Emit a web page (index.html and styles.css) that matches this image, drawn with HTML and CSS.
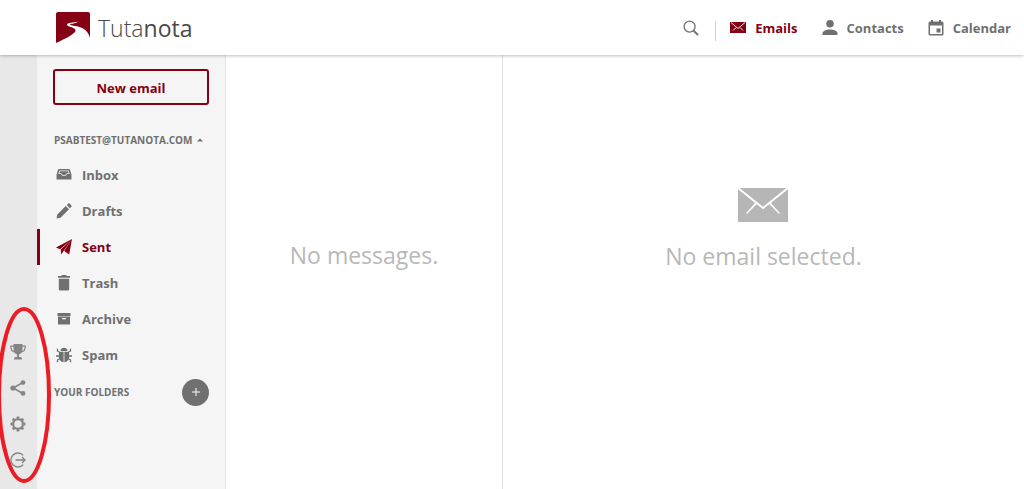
FILE: index.html
```html
<!DOCTYPE html>
<html lang="en">
<head>
  <meta charset="UTF-8">
  <meta name="viewport" content="width=device-width, initial-scale=1">
  <title>Tutanota</title>
  <link rel="stylesheet" href="styles.css">
</head>
<body>

<header class="header">
  <a class="logo" href="#">
    <svg class="logo-mark" viewBox="0 0 34 31" aria-hidden="true">
      <path fill="#850014" d="M2 0h30a2 2 0 0 1 2 2v24c-2-7-6-10-12-11.500-4-1-8-1-8-2 0-.8 5-.5 8.500-3-5 1.500-11.500 1-11.500 3.200 0 2.300 9.500 2.500 8.500 6.300C18.500 22 9 27 0 31V2a2 2 0 0 1 2-2z"/>
    </svg>
    <span class="logo-text"><span class="logo-light">Tuta</span>nota</span>
  </a>
  <nav class="nav">
    <button class="search-btn" aria-label="Search">
      <svg class="icon" viewBox="0 0 16 16" fill="none" stroke="currentColor" stroke-width="1.3"><circle cx="6.6" cy="6.6" r="5.5"/><path stroke-width="2" d="M10.7 10.7l4.400 4.400"/></svg>
    </button>
    <span class="divider"></span>
    <a class="nav-link active" href="#">
      <svg class="icon" viewBox="0 0 16 16"><path fill="currentColor" d="M0 2h16v11H0z"/><path fill="none" stroke="#fff" stroke-width=".9" d="M1 2.500l7 6 7-6M3 10.500l3-3M13 10.500l-3-3"/></svg>
      Emails
    </a>
    <a class="nav-link" href="#">
      <svg class="icon" viewBox="0 0 16 16" fill="currentColor"><circle cx="8" cy="3.800" r="3.800"/><path d="M.5 15v-1.500c0-2.600 4-4 7.500-4s7.500 1.400 7.500 4V15z"/></svg>
      Contacts
    </a>
    <a class="nav-link" href="#">
      <svg class="icon" viewBox="0 0 16 16" fill="currentColor"><path fill-rule="evenodd" d="M3 0h2v1.500h6V0h2v1.500h1a1.500 1.500 0 0 1 1.500 1.500v11a1.500 1.500 0 0 1-1.500 1.500H2A1.500 1.500 0 0 1 .5 14V3A1.500 1.500 0 0 1 2 1.500h1zM2 5.500V14h12V5.500z"/><path d="M8.500 8.500h4v4h-4z"/></svg>
      Calendar
    </a>
  </nav>
</header>

<div class="app">
  <div class="rail">
    <button class="rail-btn" aria-label="Premium">
      <svg class="icon" viewBox="0 0 16 16" fill="currentColor"><path d="M3.500 0h9v5c0 3-1.500 5-3.500 5.500V13h1.500c1 0 1.500 1 1.500 2v.5H4V15c0-1 .5-2 1.500-2H7v-2.500C5 10 3.500 8 3.500 5z"/><path fill="none" stroke="currentColor" stroke-width="1.200" d="M4 2.200H.8c0 4 1.700 5.600 4.500 5.600M12 2.200h3.200c0 4-1.700 5.600-4.500 5.600"/></svg>
    </button>
    <button class="rail-btn" aria-label="Invite">
      <svg class="icon" viewBox="0 0 16 16" fill="currentColor"><path fill="none" stroke="currentColor" stroke-width="1.500" d="M13 2.500L3 8l10 5.500"/><circle cx="13" cy="2.600" r="2.400"/><circle cx="3" cy="8" r="2.600"/><circle cx="13" cy="13.400" r="2.400"/></svg>
    </button>
    <button class="rail-btn" aria-label="Settings">
      <svg class="icon" viewBox="0 0 16 16" fill="none" stroke="currentColor"><circle cx="8" cy="8" r="4.900" stroke-width="2.200"/><path stroke-width="2.800" d="M8 .6v2M8 13.400v2M.6 8h2M13.400 8h2M2.800 2.800l1.400 1.400M11.800 11.800l1.400 1.400M13.200 2.800l-1.400 1.400M4.200 11.800l-1.400 1.400"/></svg>
    </button>
    <button class="rail-btn" aria-label="Logout">
      <svg class="icon" viewBox="0 0 16 16" fill="none" stroke="currentColor" stroke-width="1.400"><path d="M13.200 3.400a7 7 0 1 0 0 9.200M5.500 8H15M12 5l3 3-3 3"/></svg>
    </button>
  </div>

  <aside class="sidebar">
    <button class="new-email">New email</button>
    <button class="account">PSABTEST@TUTANOTA.COM
      <svg class="caret" viewBox="0 0 6 4" aria-hidden="true"><path fill="currentColor" d="M0 3.500L3 .5l3 3z"/></svg>
    </button>
    <nav class="folders">
      <a class="folder" href="#">
        <svg class="icon" viewBox="0 0 16 16" fill="currentColor"><path fill-rule="evenodd" d="M3.500 2h9c1 0 1.500.5 1.800 1.500L15.500 8v4.500H.5V8l1.200-4.500C2 2.500 2.500 2 3.500 2zM3.400 3.500L2.300 7H5l1.300 1.700h3.400L11 7h2.700l-1.100-3.500zM3.900 4.200h8.200L12.700 6.300h-2.100L9.300 7.900H6.700L5.400 6.300H3.300z"/></svg>
        Inbox
      </a>
      <a class="folder" href="#">
        <svg class="icon" viewBox="0 0 16 16" fill="currentColor"><path d="M.5 15.500l.8-4L9.800 3l3.200 3.200-8.500 8.500zM10.700 2.100L12.300.6c.4-.4.900-.4 1.300 0l1.800 1.800c.4.400.4.900 0 1.300l-1.500 1.600z"/></svg>
        Drafts
      </a>
      <a class="folder active" href="#">
        <svg class="icon" viewBox="0 0 16 16" fill="currentColor"><path d="M16 0L0 8.500l4 1.700zM16 0L4.800 10.600l.4 4.900 2.200-3.300zM16 0L8.200 12l5 3.500z"/></svg>
        Sent
      </a>
      <a class="folder" href="#">
        <svg class="icon" viewBox="0 0 16 16" fill="currentColor"><path d="M5.500 0h5v1H14v1.800H2V1h3.500zM2.800 3.800h10.400V14a1.500 1.500 0 0 1-1.500 1.500H4.300A1.500 1.500 0 0 1 2.800 14z"/></svg>
        Trash
      </a>
      <a class="folder" href="#">
        <svg class="icon" viewBox="0 0 16 16" fill="currentColor"><path fill-rule="evenodd" d="M1.500 2h13v3h-13zM2 5.600h12V13.500H2zM6 7v1.200h4V7z"/></svg>
        Archive
      </a>
      <a class="folder" href="#">
        <svg class="icon" viewBox="0 0 16 16" fill="currentColor"><path d="M4.500 4.200C4.500 1.800 6 .8 8 .8s3.500 1 3.500 3.400zM3 5h4.600v10.300C4.700 15 2.800 12.500 2.800 9.500zM13 5H8.400v10.300c2.900-.3 4.800-2.800 4.800-5.800z"/><path fill="none" stroke="currentColor" stroke-width="1.300" d="M4 5.500L1.500 4V1.700M12 5.500L14.500 4V1.700M3.500 9H0M12.500 9H16M4 11.500L1.500 13v2.300M12 11.500l2.500 1.500v2.300"/></svg>
        Spam
      </a>
    </nav>
    <div class="folders-head">
      <span>YOUR FOLDERS</span>
      <button class="add-btn" aria-label="Add folder">
        <svg class="plus" viewBox="0 0 10 10" fill="none" stroke="currentColor"><path d="M5 1v8M1 5h8"/></svg>
      </button>
    </div>
  </aside>

  <section class="mail-list">
    <p class="message">No messages.</p>
  </section>

  <main class="mail-view">
    <svg class="big-mail" viewBox="0 0 50 34" aria-hidden="true"><path fill="#b6b6b6" d="M0 0h50v34H0z"/><path fill="none" stroke="#fff" stroke-width="2" d="M0 0l25 20L50 0"/><path fill="#fff" d="M17.500 14.500l1.500 1.300L9 26l-1-.8zM32.500 14.500L31 15.800 41 26l1-.8z"/></svg>
    <p class="message">No email selected.</p>
  </main>
</div>

<!-- marker round the rail buttons -->
<svg class="marker" viewBox="0 0 52 180" aria-hidden="true"><ellipse cx="24" cy="91" rx="25" ry="86" fill="none" stroke="#ed1c24" stroke-width="4"/></svg>

</body>
</html>
```
FILE: styles.css
```css
* {
  box-sizing: border-box;
}

body {
  margin: 0;
  min-height: 100vh;
  display: flex;
  flex-direction: column;
  position: relative;
  overflow-x: hidden;
  font-family: 'Segoe UI', 'Open Sans', sans-serif;
  font-size: 13px;
  font-weight: 700;
  color: #707070;
  background: #fff;
}

a {
  color: inherit;
  text-decoration: none;
}

button {
  font: inherit;
  color: inherit;
  border: none;
  background: none;
  padding: 0;
  cursor: pointer;
}

.icon {
  width: 16px;
  height: 16px;
  flex: none;
}

.active {
  color: #850014;
}

/* Header */
.header {
  display: flex;
  align-items: center;
  justify-content: space-between;
  height: 55px;
  padding: 0 13px 0 56px;
  background: #fff;
  box-shadow: 0 1px 3px rgba(0, 0, 0, 0.25);
  z-index: 1;
}

.logo {
  display: flex;
  align-items: center;
  gap: 8px;
}

.logo-mark {
  width: 34px;
  height: 31px;
}

.logo-text {
  font-size: 23px;
  font-weight: 400;
  color: #4a4a4a;
}

.logo-light {
  font-weight: 300;
}

.nav {
  display: flex;
  align-items: center;
  gap: 24px;
}

.search-btn {
  display: flex;
  margin-right: -8px;
}

.divider {
  width: 1px;
  height: 20px;
  margin: 6px -10px 0 0;
  background: #d0d0d0;
}

.nav-link {
  display: flex;
  align-items: center;
  gap: 9px;
}

/* Columns */
.app {
  flex: 1;
  display: flex;
}

.rail {
  width: 37px;
  display: flex;
  flex-direction: column;
  justify-content: flex-end;
  padding: 0 1px 11px 0;
  background: #e8e8e8;
  color: #858585;
}

.rail-btn {
  height: 36px;
  display: flex;
  align-items: center;
  justify-content: center;
}

.sidebar {
  width: 189px;
  padding-top: 14px;
  background: #f5f5f5;
  border-right: 1px solid #e6e6e6;
}

.new-email {
  display: block;
  width: 156px;
  height: 36px;
  margin: 0 16px;
  padding-top: 2px;
  border: 2px solid #850014;
  border-radius: 3px;
  color: #850014;
}

.account {
  display: flex;
  align-items: center;
  gap: 4px;
  height: 34px;
  margin: 18px 0 0 17px;
  font-size: 10px;
}

.caret {
  width: 6px;
  height: 4px;
}

.folder {
  display: flex;
  align-items: center;
  gap: 10px;
  height: 36px;
  padding-left: 16px;
  border-left: 3px solid transparent;
}

.folder.active {
  border-left-color: #850014;
}

.folders-head {
  display: flex;
  align-items: center;
  justify-content: space-between;
  height: 36px;
  margin-top: 1px;
  padding: 0 16px 0 17px;
  font-size: 10px;
}

.add-btn {
  display: flex;
  align-items: center;
  justify-content: center;
  width: 27px;
  height: 27px;
  border-radius: 50%;
  background: #707070;
  color: #fff;
}

.plus {
  width: 10px;
  height: 10px;
}

.mail-list,
.mail-view {
  display: flex;
  flex-direction: column;
  align-items: center;
}

.mail-list {
  flex: 277;
  padding-top: 184px;
  border-right: 1px solid #e0e0e0;
}

.mail-view {
  flex: 523;
  padding-top: 133px;
}

.message {
  margin: 0;
  font-size: 23px;
  font-weight: 400;
  line-height: 32px;
  color: #b8b8b8;
}

.big-mail {
  width: 50px;
  height: 34px;
  margin-bottom: 18px;
}

.marker {
  position: absolute;
  left: 0;
  bottom: 5px;
  width: 52px;
  height: 180px;
  pointer-events: none;
  z-index: 2;
}
```
